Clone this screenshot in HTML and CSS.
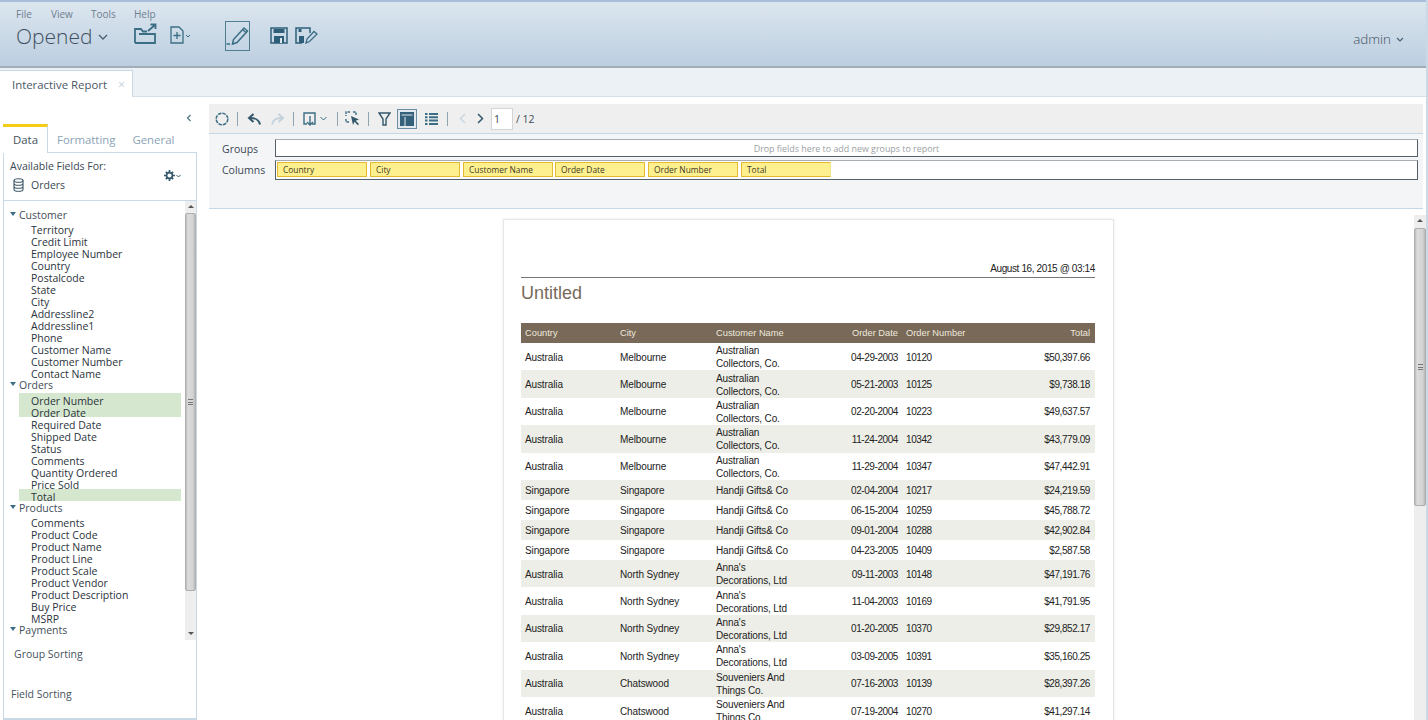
FILE: index.html
```html
<!DOCTYPE html>
<html lang="en">
<head>
<meta charset="utf-8">
<title>Interactive Report</title>
<link rel="stylesheet" href="styles.css">
</head>
<body>
<header class="appbar">
  <div class="appbar-main">
    <nav class="menu"><span class="m-file">File</span><span class="m-view">View</span><span class="m-tools">Tools</span><span class="m-help">Help</span></nav>
    <div class="actions">
      <span class="opened">Opened</span>
      <svg class="chev-big" width="10" height="6" viewBox="0 0 10 6"><path d="M1 1l4 4 4-4" fill="none" stroke="#4b5f70" stroke-width="1.300"/></svg>
      <svg class="ic-open" width="24" height="22" viewBox="0 0 24 22" fill="none" stroke="#3b6e84" stroke-width="1.800"><path d="M1 20V6h6l2 2.500h4"/><path d="M1 20h20V11H5"/><path d="M14 8l7-6M16.500 1.500H21.500v4.500"/></svg>
      <svg class="ic-new" width="21" height="18" viewBox="0 0 21 18" fill="none" stroke="#3b6e84" stroke-width="1.300"><path d="M1 1h8l4 4v12H1z"/><path d="M7 6v7M3.500 9.500h7"/><path d="M16 9l2 2 2-2" stroke-width="1"/></svg>
      <span class="edit-box"><svg width="23" height="28" viewBox="0 0 23 28" fill="none" stroke="#3b6e84" stroke-width="1.500"><path d="M.5 22H4"/><path d="M6.500 22l1-4.500L18 6l3.500 3L11 20.500z"/><path d="M16.500 7.500l3.500 3"/></svg></span>
      <svg class="ic-save" width="18" height="17" viewBox="0 0 18 17"><path d="M1 1h16v15H1z" fill="none" stroke="#2f5f78" stroke-width="1.500"/><path d="M3.500 2h11v4h-11zM4 9h10v7H4z" fill="#2f5f78"/><path d="M10 11h2v5h-2z" fill="#dbe5ee"/></svg>
      <svg class="ic-saveas" width="23" height="17" viewBox="0 0 23 17" fill="none"><path d="M7 16H1V1h14v5" stroke="#2f5f78" stroke-width="1.500"/><path d="M3.500 2h3v3h-3zM4 9h5v7H4z" fill="#2f5f78"/><path d="M11 16l1-4 7-7.500 3 2.500-7.500 7.500z" stroke="#3b6e84" stroke-width="1.300"/></svg>
    </div>
  </div>
  <div class="user"><span>admin</span><svg width="8" height="5" viewBox="0 0 8 5"><path d="M1 1l3 3 3-3" fill="none" stroke="#4b5f70" stroke-width="1.200"/></svg></div>
</header>

<div class="tabbar">
  <div class="doc-tab"><span>Interactive Report</span><span class="doc-close">×</span></div>
</div>

<div class="workspace">
  <aside class="sidebar">
    <div class="collapse"><svg width="6" height="8" viewBox="0 0 6 8"><path d="M4.500 1L1.500 4l3 3" fill="none" stroke="#4f7186" stroke-width="1.200"/></svg></div>
    <div class="side-tabs"><span class="side-tab active">Data</span><span class="side-tab">Formatting</span><span class="side-tab">General</span></div>
    <div class="side-panel">
      <div class="fields-head">
        <div>
          <div class="avail">Available Fields For:</div>
          <div class="source">
            <svg width="11" height="14" viewBox="0 0 11 14" fill="none" stroke="#3c5566" stroke-width="1.100"><ellipse cx="5.500" cy="2.500" rx="4.500" ry="1.800"/><path d="M1 2.500v9c0 1 2 1.800 4.500 1.800s4.500-.8 4.500-1.800v-9M1 5.500c0 1 2 1.800 4.500 1.800s4.500-.8 4.500-1.800M1 8.500c0 1 2 1.800 4.500 1.800s4.500-.8 4.500-1.800"/></svg>
            <span>Orders</span>
          </div>
        </div>
        <div class="gear">
          <svg width="11" height="11" viewBox="0 0 13 13"><circle cx="6.500" cy="6.500" r="3.500" fill="none" stroke="#34586c" stroke-width="2"/><path d="M5.500 0h2v2.500h-2zM5.500 10.500h2V13h-2zM0 5.500h2.500v2H0zM10.500 5.500H13v2h-2.500zM1.500 3L3 1.500l1.500 1.500L3 4.500zM10 1.500L11.500 3 10 4.500 8.500 3zM3 11.500L1.500 10 3 8.500 4.500 10zM11.500 10L10 11.500 8.500 10 10 8.500z" fill="#34586c"/></svg>
          <svg width="5" height="4" viewBox="0 0 5 4"><path d="M.5 1l2 2 2-2" fill="none" stroke="#34586c"/></svg>
        </div>
      </div>
      <div class="tree-wrap">
        <div class="tree">
          <div class="grp">Customer</div>
          <ul class="items">
            <li>Territory</li><li>Credit Limit</li><li>Employee Number</li><li>Country</li><li>Postalcode</li><li>State</li><li>City</li><li>Addressline2</li><li>Addressline1</li><li>Phone</li><li>Customer Name</li><li>Customer Number</li><li>Contact Name</li>
          </ul>
          <div class="grp">Orders</div>
          <ul class="items">
            <li class="used">Order Number</li><li class="used">Order Date</li><li>Required Date</li><li>Shipped Date</li><li>Status</li><li>Comments</li><li>Quantity Ordered</li><li>Price Sold</li><li class="used">Total</li>
          </ul>
          <div class="grp">Products</div>
          <ul class="items">
            <li>Comments</li><li>Product Code</li><li>Product Name</li><li>Product Line</li><li>Product Scale</li><li>Product Vendor</li><li>Product Description</li><li>Buy Price</li><li>MSRP</li>
          </ul>
          <div class="grp">Payments</div>
        </div>
        <div class="vbar vbar-side">
          <div class="arrow up"></div>
          <div class="thumb"><i></i></div>
          <div class="arrow down"></div>
        </div>
      </div>
      <div class="sort-group">Group Sorting</div>
      <div class="sort-field">Field Sorting</div>
    </div>
  </aside>

  <main class="content">
    <div class="toolbar">
      <svg class="t-circle" width="14" height="14" viewBox="0 0 14 14"><circle cx="7" cy="7" r="5.800" fill="none" stroke="#3b6e84" stroke-width="1.500" stroke-dasharray="3.500 1"/></svg>
      <i class="sep s1"></i>
      <svg class="t-undo" width="14" height="12" viewBox="0 0 14 12" fill="none" stroke="#34586c" stroke-width="2"><path d="M13 11.500C12 6.500 9 5 3 5"/><path d="M6.500 1L2 5l4.500 4"/></svg>
      <svg class="t-redo" width="14" height="12" viewBox="0 0 14 12" fill="none" stroke="#c3d3de" stroke-width="2"><path d="M1 11.500C2 6.500 5 5 11 5"/><path d="M7.500 1L12 5 7.500 9"/></svg>
      <i class="sep s2"></i>
      <svg class="t-export" width="13" height="14" viewBox="0 0 13 14" fill="none" stroke="#3b6e84" stroke-width="1.400"><path d="M4 12H1V1h11v11h-3"/><path d="M7 4v9M4 10l3 3 3-3"/></svg>
      <svg class="t-chev" width="7" height="5" viewBox="0 0 7 5"><path d="M.5 1l3 3 3-3" fill="none" stroke="#3b6e84"/></svg>
      <i class="sep s3"></i>
      <svg class="t-select" width="15" height="15" viewBox="0 0 15 15" fill="none"><path d="M5 1H1v4M1 8v3h3M8 1h3v3" stroke="#3b6e84" stroke-width="1.400" stroke-dasharray="2.500 1"/><path d="M6 5l8 3.500-3.300 1.200L14 13l-1.200 1.200-3.200-3.400L8 14z" fill="#34586c"/></svg>
      <i class="sep s4"></i>
      <svg class="t-filter" width="13" height="14" viewBox="0 0 13 14" fill="none" stroke="#34586c" stroke-width="1.400"><path d="M1 1h11L8 7v6H5V7z"/></svg>
      <span class="t-layout"><svg width="14" height="14" viewBox="0 0 14 14"><path d="M0 0h14v14H0z" fill="#34607a"/><path d="M1.500 2.500h11v1h-11z" fill="#e5eaee"/><path d="M4.500 5h1v9h-1z" fill="#e5eaee"/></svg></span>
      <svg class="t-list" width="13" height="12" viewBox="0 0 13 12" fill="#3b6e84"><path d="M0 0h2.500v2H0zM4 0h9v2H4zM0 3.300h2.500v2H0zM4 3.300h9v2H4zM0 6.600h2.500v2H0zM4 6.600h9v2H4zM0 10h2.500v2H0zM4 10h9v2H4z"/></svg>
      <i class="sep s5"></i>
      <svg class="t-prev" width="7" height="11" viewBox="0 0 7 11"><path d="M6 1L1.500 5.500 6 10" fill="none" stroke="#c9d8e2" stroke-width="1.500"/></svg>
      <svg class="t-next" width="7" height="11" viewBox="0 0 7 11"><path d="M1 1l4.500 4.500L1 10" fill="none" stroke="#34586c" stroke-width="1.500"/></svg>
      <span class="pager-input">1</span>
      <span class="pager-total">/ 12</span>
    </div>

    <div class="zones">
      <div class="zone-row">
        <span class="zone-label">Groups</span>
        <div class="zone-box hint">Drop fields here to add new groups to report</div>
      </div>
      <div class="zone-row">
        <span class="zone-label">Columns</span>
        <div class="zone-box chips"><span>Country</span><span>City</span><span>Customer Name</span><span>Order Date</span><span>Order Number</span><span>Total</span></div>
      </div>
    </div>

    <div class="preview">
      <div class="paper-scroll">
        <article class="paper">
          <div class="stamp">August 16, 2015 @ 03:14</div>
          <h1 class="rep-title">Untitled</h1>
          <table class="rep">
            <colgroup><col class="c1"><col class="c2"><col class="c3"><col class="c4"><col class="c5"><col></colgroup>
            <thead><tr><th>Country</th><th>City</th><th>Customer Name</th><th class="r">Order Date</th><th>Order Number</th><th class="r">Total</th></tr></thead>
            <tbody>
              <tr class="tall"><td>Australia</td><td>Melbourne</td><td>Australian Collectors, Co.</td><td class="r">04-29-2003</td><td>10120</td><td class="r">$50,397.66</td></tr>
              <tr class="tall"><td>Australia</td><td>Melbourne</td><td>Australian Collectors, Co.</td><td class="r">05-21-2003</td><td>10125</td><td class="r">$9,738.18</td></tr>
              <tr class="tall"><td>Australia</td><td>Melbourne</td><td>Australian Collectors, Co.</td><td class="r">02-20-2004</td><td>10223</td><td class="r">$49,637.57</td></tr>
              <tr class="tall"><td>Australia</td><td>Melbourne</td><td>Australian Collectors, Co.</td><td class="r">11-24-2004</td><td>10342</td><td class="r">$43,779.09</td></tr>
              <tr class="tall"><td>Australia</td><td>Melbourne</td><td>Australian Collectors, Co.</td><td class="r">11-29-2004</td><td>10347</td><td class="r">$47,442.91</td></tr>
              <tr><td>Singapore</td><td>Singapore</td><td>Handji Gifts&amp; Co</td><td class="r">02-04-2004</td><td>10217</td><td class="r">$24,219.59</td></tr>
              <tr><td>Singapore</td><td>Singapore</td><td>Handji Gifts&amp; Co</td><td class="r">06-15-2004</td><td>10259</td><td class="r">$45,788.72</td></tr>
              <tr><td>Singapore</td><td>Singapore</td><td>Handji Gifts&amp; Co</td><td class="r">09-01-2004</td><td>10288</td><td class="r">$42,902.84</td></tr>
              <tr><td>Singapore</td><td>Singapore</td><td>Handji Gifts&amp; Co</td><td class="r">04-23-2005</td><td>10409</td><td class="r">$2,587.58</td></tr>
              <tr class="tall"><td>Australia</td><td>North Sydney</td><td>Anna's Decorations, Ltd</td><td class="r">09-11-2003</td><td>10148</td><td class="r">$47,191.76</td></tr>
              <tr class="tall"><td>Australia</td><td>North Sydney</td><td>Anna's Decorations, Ltd</td><td class="r">11-04-2003</td><td>10169</td><td class="r">$41,791.95</td></tr>
              <tr class="tall"><td>Australia</td><td>North Sydney</td><td>Anna's Decorations, Ltd</td><td class="r">01-20-2005</td><td>10370</td><td class="r">$29,852.17</td></tr>
              <tr class="tall"><td>Australia</td><td>North Sydney</td><td>Anna's Decorations, Ltd</td><td class="r">03-09-2005</td><td>10391</td><td class="r">$35,160.25</td></tr>
              <tr class="tall"><td>Australia</td><td>Chatswood</td><td>Souveniers And Things Co.</td><td class="r">07-16-2003</td><td>10139</td><td class="r">$28,397.26</td></tr>
              <tr class="tall"><td>Australia</td><td>Chatswood</td><td>Souveniers And Things Co.</td><td class="r">07-19-2004</td><td>10270</td><td class="r">$41,297.14</td></tr>
            </tbody>
          </table>
        </article>
      </div>
      <div class="vbar vbar-main">
        <div class="arrow up"></div>
        <div class="thumb"><i></i></div>
      </div>
    </div>
  </main>
</div>
</body>
</html>
```

FILE: styles.css
```css
* { box-sizing: border-box; }
html, body { margin: 0; height: 720px; overflow: hidden; }
body {
  width: 1428px;
  display: flex;
  flex-direction: column;
  background: #fff;
  font-family: "Open Sans", "Noto Sans", sans-serif;
  color: #2d3a45;
  border-right: 2px solid #c9d9e6;
}

/* header */
.appbar {
  flex: none;
  height: 68px;
  display: flex;
  justify-content: space-between;
  border-top: 2px solid #a9bddb;
  border-bottom: 2px solid #a3adb8;
  background: linear-gradient(#dce6ef, #bccee0);
}
.appbar-main { padding: 5px 0 0 16px; }
.menu { display: flex; height: 14px; font-size: 10px; line-height: 14px; color: #6e7f8e; }
.m-file { width: 35px; }
.m-view { width: 40px; }
.m-tools { width: 43px; }
.actions { display: flex; align-items: center; height: 35px; margin-top: -3px; }
.opened { flex: none; font-size: 21px; line-height: 30px; font-weight: 300; color: #3f5060; width: 77px; }
.chev-big { margin: 3px 0 0 5px; }
.ic-open { margin: -4px 0 0 26px; }
.ic-new { margin: -2px 0 0 12px; }
.edit-box { flex: none; display: flex; width: 25px; height: 30px; margin: 0 0 0 34px; border: 1px solid #4f7d92; }
.ic-save { margin: 0 0 0 20px; }
.ic-saveas { margin: 0 0 0 7px; }
.user { display: flex; align-items: center; gap: 5px; padding: 10px 22px 0 0; font-size: 13.400px; font-weight: 300; color: #3f5060; }

/* document tabs */
.tabbar { flex: none; height: 29px; padding-top: 2px; background: #ebf1f4; border-bottom: 1px solid #d4e0ea; }
.doc-tab {
  width: 133px; height: 27px;
  display: flex; align-items: center;
  padding-left: 12px;
  background: #fff;
  border: solid #c9d9e6;
  border-width: 1px 1px 0 0;
  font-size: 11.400px; color: #4a5864;
}
.doc-close { margin-left: 11px; font-size: 12px; color: #c4ced6; }

/* sidebar */
.workspace { flex: 1; min-height: 0; display: flex; }
.sidebar { flex: none; width: 197px; padding-left: 3px; display: flex; flex-direction: column; }
.collapse { height: 27px; padding: 15px 0 0 183px; line-height: 8px; }
.side-tabs { height: 28px; display: flex; font-size: 11.400px; color: #8ba3b6; }
.side-tab { padding: 8px 10px 0; }
.side-tab:nth-child(2) { padding-left: 9px; padding-right: 8px; }
.side-tab:nth-child(3) { padding-left: 9px; }
.side-tab.active {
  width: 45px;
  height: 29px;
  position: relative;
  z-index: 1;
  padding: 5px 0 0 10px;
  background: #fff;
  color: #46535e;
  border-top: 3px solid #f4ce15;
  border-right: 1px solid #c9d9e6;
}
.side-panel {
  flex: 1; min-height: 0;
  border: solid #c9d9e6;
  border-width: 1px 1px 2px 1px;
  font-size: 10.500px;
  display: flex;
  flex-direction: column;
}
.fields-head { flex: none; height: 47px; padding: 5px 0 0 6px; display: flex; justify-content: space-between; }
.avail { line-height: 16px; color: #3a4854; }
.source { display: flex; align-items: center; gap: 7px; margin-top: 4px; line-height: 14px; color: #3a4854; }
.source svg { margin-left: 3px; }
.gear { display: flex; align-items: center; gap: 1px; height: 11px; margin: 12px 15px 0 0; }
.tree-wrap { flex: none; height: 440px; display: flex; border-top: 1px solid #c9d9e6; overflow: hidden; }
.tree { flex: 1; min-width: 0; padding-top: 6.500px; line-height: 15.500px; color: #2a333b; }
.grp { height: 14.500px; padding-left: 15px; position: relative; color: #3f4d59; }
.grp::before {
  content: "";
  position: absolute; left: 6px; top: 4px;
  border: 3.500px solid transparent;
  border-top: 4px solid #3b6e84;
  border-bottom: 0;
}
.items { list-style: none; margin: 0; padding: 0 4px 0 15px; line-height: 17px; }
.items li { height: 12px; padding-left: 12px; }
.items li.used { background: #d6e7cf; }

/* scrollbars */
.vbar { flex: none; display: flex; flex-direction: column; background: #eee; }
.vbar-side { width: 11px; height: 100%; }
.arrow { flex: none; height: 12px; position: relative; }
.arrow::before {
  content: "";
  position: absolute; left: 3px; top: 4px;
  border: 3px solid transparent;
  border-bottom: 3px solid #555;
  border-top: 0;
}
.arrow.down::before { border-bottom: 0; border-top: 3px solid #555; }
.thumb {
  flex: none;
  display: flex; align-items: center; justify-content: center;
  background: linear-gradient(90deg, #b9b9b9, #dcdcdc 20%, #d4d4d4 75%, #b8b8b8);
  border: 1px solid #b0b0b0;
  border-radius: 2px;
}
.vbar-side .thumb { height: 378px; }
.vbar-side .arrow.down { margin-top: auto; }
.vbar-main { width: 12px; height: 100%; margin-top: 6px; }
.vbar-main .arrow { height: 13px; }
.vbar-main .thumb { height: 278px; }
.thumb i { width: 5px; height: 6px; border-top: 1px solid #777; border-bottom: 1px solid #777; position: relative; }
.thumb i::before { content: ""; position: absolute; left: 0; right: 0; top: 1.500px; border-top: 1px solid #777; }
.sort-group { margin: 7px 0 0 10px; line-height: 15px; color: #46535e; }
.sort-field { margin: 25px 0 0 7px; line-height: 15px; color: #46535e; }

/* main column */
.content { flex: 1; min-width: 0; display: flex; flex-direction: column; padding: 7px 0 0 12px; }
.toolbar { flex: none; height: 30px; margin-right: 3px; display: flex; align-items: center; background: #efefef; border-bottom: 1px solid #c4d8e8; }
.sep { flex: none; width: 1px; height: 14px; background: #8fa4b2; }
.t-circle { margin-left: 6px; }
.s1 { margin-left: 8px; }
.t-undo { margin-left: 9px; }
.t-redo { margin-left: 10px; }
.s2 { margin-left: 8px; }
.t-export { margin-left: 9px; }
.t-chev { margin-left: 4px; }
.s3 { margin-left: 10px; }
.t-select { margin-left: 7px; }
.s4 { margin-left: 8px; }
.t-filter { margin-left: 9px; }
.t-layout { flex: none; display: flex; align-items: center; justify-content: center; width: 20px; height: 20px; margin-left: 6px; border: 1px solid #6a8ea3; background: #e4e9ed; }
.t-list { margin-left: 8px; }
.s5 { margin-left: 9px; }
.t-prev { margin-left: 11px; }
.t-next { margin-left: 11px; }
.pager-input { flex: none; width: 22px; height: 22px; margin-left: 7px; padding-left: 2px; border: 1px solid #d5d5d5; background: #fff; font-size: 10.500px; line-height: 21px; color: #3a4854; }
.pager-total { margin-left: 3px; font-size: 10.500px; color: #3f4d59; }

.zones { flex: none; height: 75px; margin-right: 3px; padding: 5px 5px 0 13px; background: #f4f5f7; border-bottom: 1px solid #c4d8e8; display: flex; flex-direction: column; gap: 3px; }
.zone-row { display: flex; align-items: center; }
.zone-label { width: 53px; font-size: 10.500px; color: #3a4854; }
.zone-row:first-child .zone-label { padding-top: 2px; }
.zone-box { flex: 1; min-width: 0; background: #fff; border: 1px solid #55606a; border-top-color: #a8aeb3; }
.hint { height: 18px; font-size: 8.900px; line-height: 17px; text-align: center; color: #9b9fa4; }
.chips { height: 20px; display: flex; gap: 3px; padding: 1px 0 0 1px; }
.chips span { width: 90px; height: 15px; padding-left: 5px; background: #fff08f; border: 1px solid #e4bb30; font-size: 8.400px; line-height: 14px; color: #3d3a24; }
.chips span:nth-child(4) { margin-left: -1px; }
.chips span:last-child { border-right-color: #f4e58c; }

/* report */
.preview { flex: 1; min-height: 0; display: flex; overflow: hidden; }
.paper-scroll { flex: 1; min-width: 0; overflow: hidden; padding: 10px 0 0 294px; }
.paper { width: 611px; height: 800px; padding: 41px 18px 0 17px; background: #fff; border: 1px solid #e6e6e6; box-shadow: 0 0 3px #eee; font-family: "Liberation Sans", Arial, sans-serif; }
.stamp { height: 17px; font-size: 10px; letter-spacing: -.38px; line-height: 15px; text-align: right; color: #222; border-bottom: 1px solid #777; }
.rep-title { margin: 5px 0 20px; font-size: 18px; line-height: 20px; font-weight: 400; color: #776a5b; }
.rep { width: 574px; table-layout: fixed; border-collapse: collapse; font-size: 10px; line-height: 13px; letter-spacing: -.12px; color: #222; }
.c1 { width: 95px; } .c2 { width: 96px; } .c3 { width: 95px; } .c4 { width: 95px; } .c5 { width: 100px; }
.rep th { height: 20px; padding: 0 4px; background: #786958; font-size: 9.300px; font-weight: 400; text-align: left; color: #eee8de; letter-spacing: 0; }
.rep td { padding: 2px 4px 0; vertical-align: middle; }
.rep td:nth-child(3) { padding-right: 12px; }
.rep td:nth-child(n+4) { letter-spacing: -.42px; }
.rep .r { text-align: right; }
.rep th:last-child, .rep td:last-child { padding-right: 5px; }
.rep tr { height: 20px; }
.rep tr.tall { height: 27.400px; }
.rep tr.tall td { padding-top: 1px; }
.rep tbody tr:nth-child(even) td { background: #edeee7; }
```
